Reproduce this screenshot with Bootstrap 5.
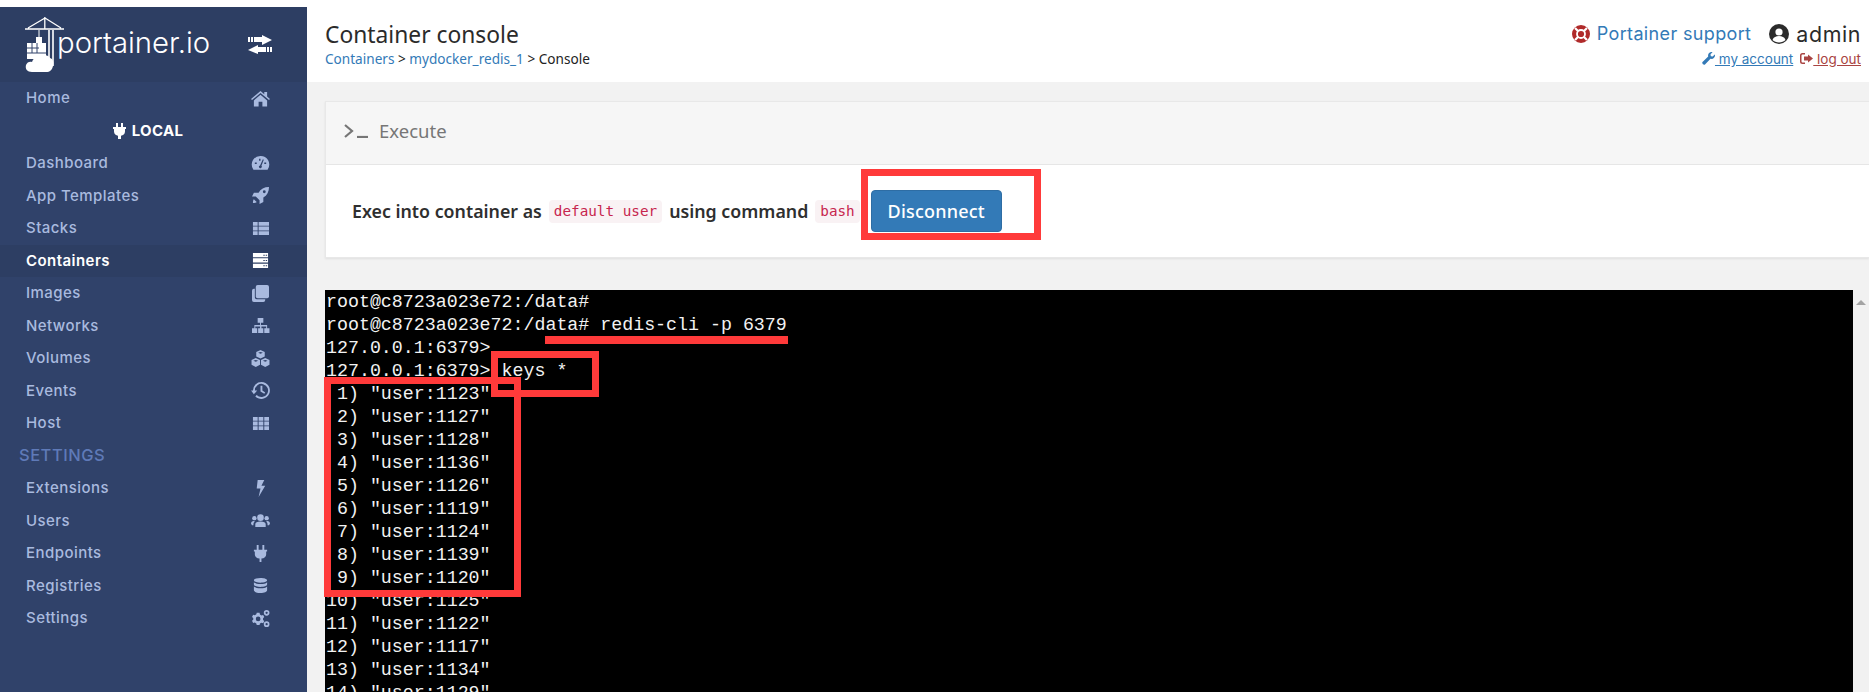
<!DOCTYPE html>
<html lang="en">
<head>
<meta charset="utf-8">
<title>Container console</title>
<link href="https://cdn.jsdelivr.net/npm/bootstrap@5.3.0/dist/css/bootstrap.min.css" rel="stylesheet">
<style>
html,body{height:692px;overflow:hidden;background:#fff;}
.shell{height:692px;}
.side{width:307px;margin-top:7px;background:#30426a;color:#a9badf;font-family:Inter,sans-serif;font-weight:500;font-size:15px;letter-spacing:.45px;flex:none;}
.brandbar{height:75px;background:#2d3e63;padding-left:25px;padding-right:35px;}
.brandname{font-family:Inter,sans-serif;font-weight:300;font-size:29.3px;letter-spacing:0;color:#fff;margin-left:-8px;margin-top:-4px;}
.navrow{height:32.5px;padding:0 37px 0 26px;color:#a9badf;text-decoration:none;}
.navrow svg{width:19px;height:17px;fill:currentColor;}
.navrow.on{background:#2d3e63;color:#fff;font-weight:600;}
.navzone{height:32.5px;color:#fff;font-weight:700;font-size:15px;letter-spacing:.3px;gap:6px;margin-left:-11px;}
.navzone svg{width:13px;height:16px;fill:#fff;}
.navhead{height:32.5px;padding-left:19px;color:#5f7ab8;font-size:16.5px;font-weight:500;letter-spacing:.5px;}
.mainpane{min-width:0;background:#f2f2f2;}
.topband{height:82px;background:#fff;padding:0 8px 0 18px;}
.pagetitle{font-family:"Noto Sans",sans-serif;font-size:22.8px;color:#2b2b2b;margin-top:21px;line-height:28px;}
.crumbs{font-family:"Noto Sans",sans-serif;font-size:13.6px;color:#222;line-height:18px;margin-top:1px;}
.crumbs a,.blue{color:#337ab7;text-decoration:none;}
.useraside{font-family:Inter,sans-serif;margin-top:22px;}
.supportline{font-size:18px;letter-spacing:.35px;line-height:24px;gap:7px;}
.adminline{font-size:21.4px;letter-spacing:.6px;line-height:24px;color:#2b2b2b;gap:7px;margin-left:18px;}
.linksline{font-size:13.5px;line-height:18px;margin-top:4px;gap:7px;}
.linksline a{color:#337ab7;text-decoration:underline;}
.linksline a.redlink{color:#a94442;}
.linksline svg{width:13px;height:13px;fill:currentColor;vertical-align:-1px;}
.panelwrap{padding:19px 0 0 18px;}
.execpanel{border-radius:0;border:1px solid #e8e8e8;border-right:0;box-shadow:0 1px 2px rgba(0,0,0,.08);height:157px;}
.execpanel .card-header{height:63px;background:#f6f6f6;border-bottom:1px solid #e6e6e6;border-radius:0!important;padding:0 0 5px 18px;font-family:"Noto Sans",sans-serif;font-size:18.5px;color:#767676;gap:10px;}
.execpanel .card-body{padding:25px 0 0 26px;font-family:"Noto Sans",sans-serif;font-weight:600;font-size:17.8px;color:#2f2f2f;align-items:flex-start;}
.execline{height:42px;gap:7px;}
.codechip{font-family:"DejaVu Sans Mono",monospace;font-size:14.3px;font-weight:500;background:#f9f2f4;color:#c7254e;border-radius:4px;padding:3px 5px;line-height:17px;}
.btn.discobtn{flex:none;background:#337ab7;border:1px solid #2e6da4;color:#fff;font-family:"Noto Sans",sans-serif;font-weight:500;font-size:18px;letter-spacing:.2px;width:131px;height:42px;padding:0;margin-left:11px;border-radius:4px;}
.termwrap{margin:32px 0 0 18px;height:402px;}
.termbox{background:#000;height:402px;overflow:hidden;}
.termtext{flex:1;margin:0;padding:1px 0 0 1px;color:#f2f2f2;font-family:"Liberation Mono",monospace;font-size:18.3px;line-height:23px;overflow:hidden;}
.termbar{width:16px;background:#f1f1f1;flex:none;}
.termarrow{width:0;height:0;border-left:5px solid transparent;border-right:5px solid transparent;border-bottom:5px solid #a3a3a3;margin:10px auto 0;}
.redmark{position:absolute;border:7px solid #ff3a3a;pointer-events:none;}
.redfill{position:absolute;background:#ff3a3a;}
</style>
</head>
<body>
<div class="shell d-flex">
  <aside class="side d-flex flex-column">
    <div class="brandbar d-flex align-items-center justify-content-between">
      <div class="d-flex align-items-center">
        <svg width="40" height="56" viewBox="0 0 40 56" fill="none" stroke="#fff" aria-hidden="true">
          <path d="M0 12H39M20 1 3 11M20 1l16 10M19.800 0v12" stroke-width="1.300"/>
          <path d="M24 13v36M28 13v36" stroke-width="1.600"/>
          <path d="M14 13v8" stroke-width="1"/>
          <rect x="11" y="20" width="6" height="6" fill="#fff" stroke="none"/>
          <g fill="#fff" stroke="none"><path d="M2 26h19v16H2z"/></g>
          <path d="M2 31h12M2 36h19M7 26v10M12 26v10" stroke="#30426a" stroke-width="1"/>
          <path d="M7 55c-5 0-7-3-6-7 1-3 4-4 6-3 1-4 5-6 9-5 2-3 8-2 9 1 3 1 4 4 3 8-1 4-3 6-7 6z" fill="#fff" stroke="none"/>
        </svg>
        <span class="brandname">portainer.io</span>
      </div>
      <svg width="24" height="20" viewBox="0 0 24 20" fill="#fff" aria-hidden="true"><path d="M14 2V0l10 5-10 5V7h-8V2zM0 2h2v5H0zM3 2h2v5H3zM10 10v2h8v5h-8v2L0 15z"/><path d="M19 12h2v5h-2zM22 12h2v5h-2z"/></svg>
    </div>
    <a class="navrow d-flex align-items-center justify-content-between" href="#">Home<svg viewBox="0 0 20 18"><path d="M10 1 0 9.500l1 1.200 9-7.600 9 7.600 1-1.200-3-2.500V2h-3v2.500zM3 11l7-6 7 6v6.500h-5v-5H8v5H3z"/></svg></a>
    <div class="navzone d-flex align-items-center justify-content-center"><svg viewBox="0 0 13 16"><path d="M3 0h2v4h3V0h2v4h3v2h-1v2.500c0 2.500-2 4-4 4.300V16H5v-3.200c-2-.3-4-1.800-4-4.300V6H0V4h3z"/></svg>LOCAL</div>
    <a class="navrow d-flex align-items-center justify-content-between" href="#">Dashboard<svg viewBox="0 0 20 18"><path fill-rule="evenodd" d="M10 1a9 9 0 0 0-8 13.500l.5 1h15l.5-1A9 9 0 0 0 10 1zM8.500 4h1.500v2H8.500zM4 8h2v1.500H4zM14 8h2v1.500h-2zM12.500 4.500l1 .5L11 11.500a1.500 1.500 0 1 1-1.500-.5z"/></svg></a>
    <a class="navrow d-flex align-items-center justify-content-between" href="#">App Templates<svg viewBox="0 0 20 18"><path fill-rule="evenodd" d="M19 0c-5 0-9 2-11 6H3L1 10h4l4 4v4l4-2v-5c4-2 6-6 6-11zM14 3.500a1.500 1.500 0 1 1 0 3 1.500 1.500 0 0 1 0-3zM3 13c-1 1-1 3-1 4 1 0 3 0 4-1z"/></svg></a>
    <a class="navrow d-flex align-items-center justify-content-between" href="#">Stacks<svg viewBox="0 0 20 18"><path d="M2 2h5v4H2zM8 2h11v4H8zM2 7h5v4H2zM8 7h11v4H8zM2 12h5v4H2zM8 12h11v4H8z"/></svg></a>
    <a class="navrow on d-flex align-items-center justify-content-between" href="#">Containers<svg viewBox="0 0 20 18"><path fill-rule="evenodd" d="M2 1h16v4.500H2zM2 6.700h16v4.500H2zM2 12.500h16V17H2zM13 3h1.500v1H13zM15.500 3H17v1h-1.500zM13 8.500h1.500v1H13zM15.500 8.500H17v1h-1.500zM13 14h1.500v1H13zM15.500 14H17v1h-1.500z"/></svg></a>
    <a class="navrow d-flex align-items-center justify-content-between" href="#">Images<svg viewBox="0 0 20 18"><path d="M7 0h10a2 2 0 0 1 2 2v10a2 2 0 0 1-2 2H7a2 2 0 0 1-2-2V2a2 2 0 0 1 2-2z"/><path d="M4 4v9a2 2 0 0 0 2 2h9v1a2 2 0 0 1-2 2H3a2 2 0 0 1-2-2V6a2 2 0 0 1 2-2z"/></svg></a>
    <a class="navrow d-flex align-items-center justify-content-between" href="#">Networks<svg viewBox="0 0 20 18"><path d="M7 1h6v5h-2.500v2.500H17V12h2.500v5h-5.500v-5h2v-2h-5v2h2v5H7.500v-5h2v-2h-5v2h2v5H1v-5h2.500V8.500h6V6H7z"/></svg></a>
    <a class="navrow d-flex align-items-center justify-content-between" href="#">Volumes<svg viewBox="0 0 20 18"><path fill-rule="evenodd" d="M10 0l4.500 2v5l-4.500 2-4.500-2V2zM10 2 7.500 3l2.500 1 2.500-1zM5 8.500l4.500 2v5L5 18l-4.500-2.500v-5zM5 10.500 2.500 11.500 5 12.500l2.500-1zM15 8.500l4.500 2v5L15 18l-4.500-2.500v-5zM15 10.500l-2.500 1 2.500 1 2.500-1z"/></svg></a>
    <a class="navrow d-flex align-items-center justify-content-between" href="#">Events<svg viewBox="0 0 20 18"><path d="M11 0a9 9 0 1 1-6.500 15.300l1.400-1.500A7 7 0 1 0 4 9h2.500L3 13 0 9h2a9 9 0 0 1 9-9zM10 4h2v5l3 2-1 1.500-4-2.500z"/></svg></a>
    <a class="navrow d-flex align-items-center justify-content-between" href="#">Host<svg viewBox="0 0 20 18"><path d="M2 2h5v4H2zM8 2h5v4H8zM14 2h5v4h-5zM2 7h5v4H2zM8 7h5v4H8zM14 7h5v4h-5zM2 12h5v4H2zM8 12h5v4H8zM14 12h5v4h-5z"/></svg></a>
    <div class="navhead d-flex align-items-center">SETTINGS</div>
    <a class="navrow d-flex align-items-center justify-content-between" href="#">Extensions<svg viewBox="0 0 20 18"><path d="M7 0h7l-3 6h4L8 18l2-9H6z"/></svg></a>
    <a class="navrow d-flex align-items-center justify-content-between" href="#">Users<svg viewBox="0 0 20 18"><circle cx="10" cy="6" r="3.500"/><circle cx="3.500" cy="6.500" r="2.300"/><circle cx="16.500" cy="6.500" r="2.300"/><path d="M4.500 16v-3c0-2 2-3 5.500-3s5.500 1 5.500 3v3zM0 12.500c0-2 1-3 3-3l1 .5c-1 1-1.500 1.500-1.500 4H1zM20 12.500c0-2-1-3-3-3l-1 .5c1 1 1.500 1.500 1.500 4H19z"/></svg></a>
    <a class="navrow d-flex align-items-center justify-content-between" href="#">Endpoints<svg viewBox="0 0 20 18"><path d="M6 0h2v5h4V0h2v5h3v2h-1v3c0 2.500-2 4-5 4.300V18H9v-3.700C6 14 4 12.500 4 10V7H3V5h3z"/></svg></a>
    <a class="navrow d-flex align-items-center justify-content-between" href="#">Registries<svg viewBox="0 0 20 18"><path d="M10 1c4 0 7 1 7 2.500S14 6 10 6 3 5 3 3.500 6 1 10 1zM3 5.500C4.500 7 7 7.500 10 7.500s5.500-.5 7-2V8c0 1.500-3 2.500-7 2.500S3 9.500 3 8zM3 10c1.500 1.500 4 2 7 2s5.500-.5 7-2v4c0 1.500-3 3-7 3s-7-1.500-7-3z"/></svg></a>
    <a class="navrow d-flex align-items-center justify-content-between" href="#">Settings<svg viewBox="0 0 20 18"><path fill-rule="evenodd" d="M6 3h3l.4 1.800 1.600.9 1.800-.5 1.200 2.300-1.300 1.200v1.800l1.300 1.200-1.200 2.300-1.800-.5-1.600.9L9 16H6l-.4-1.800-1.600-.9-1.800.5L1 11.500l1.300-1.200V8.500L1 7.300l1.200-2.300 1.800.5 1.600-.9zM7.500 7a2.500 2.500 0 1 0 0 5 2.500 2.500 0 0 0 0-5z"/><path fill-rule="evenodd" d="M16.500 0a3 3 0 1 1 0 6 3 3 0 0 1 0-6zm0 1.800a1.200 1.200 0 1 0 0 2.400 1.200 1.200 0 0 0 0-2.400zM16.500 12a3 3 0 1 1 0 6 3 3 0 0 1 0-6zm0 1.800a1.200 1.200 0 1 0 0 2.400 1.200 1.200 0 0 0 0-2.400z"/></svg></a>
  </aside>

  <main class="mainpane flex-grow-1 d-flex flex-column">
    <header class="topband d-flex justify-content-between">
      <div>
        <div class="pagetitle">Container console</div>
        <div class="crumbs"><a href="#">Containers</a> &gt; <a href="#">mydocker_redis_1</a> &gt; Console</div>
      </div>
      <div class="useraside d-flex flex-column align-items-end">
        <div class="d-flex align-items-center">
          <a class="supportline blue d-flex align-items-center" href="#"><svg width="18" height="18" viewBox="0 0 18 18" aria-hidden="true"><circle cx="9" cy="9" r="9" fill="#b02a2a"/><circle cx="9" cy="9" r="4" fill="none" stroke="#fff" stroke-width="1.800"/><path d="M3 3l3 3M15 3l-3 3M3 15l3-3M15 15l-3-3" stroke="#fff" stroke-width="2.200"/></svg>Portainer support</a>
          <div class="adminline d-flex align-items-center"><svg width="20" height="20" viewBox="0 0 20 20" aria-hidden="true"><circle cx="10" cy="10" r="10" fill="#2b2b2b"/><circle cx="10" cy="8" r="3.600" fill="#fff"/><path d="M3.500 16c1-3 3.500-4 6.500-4s5.500 1 6.500 4c-1.500 1.500-4 2.500-6.500 2.500S5 17.500 3.500 16z" fill="#fff"/></svg>admin</div>
        </div>
        <div class="linksline d-flex">
          <a href="#"><svg viewBox="0 0 13 13" aria-hidden="true"><path d="M13 3.500c0 2-2 4-4.500 3.300L3 12.500c-1 1-3.500-1-2.500-2.500l5.700-5.500C5.500 2 7.500 0 9.500 0c.5 0 1 0 1 .3L8.500 2.300l.3 1.900 1.900.3 2-2c.2 0 .3.500.3 1z"/></svg> my account </a>
          <a class="redlink" href="#"><svg viewBox="0 0 13 13" aria-hidden="true"><path d="M5 1v1.500H2.500C2 2.500 1.500 3 1.500 3.500v6c0 .5.500 1 1 1H5V12H2.500A2.500 2.500 0 0 1 0 9.500v-6A2.500 2.500 0 0 1 2.500 1zM8 2.500l5 4-5 4V8.500H4v-4h4z"/></svg> log out</a>
        </div>
      </div>
    </header>

    <div class="panelwrap">
      <div class="position-relative">
        <section class="execpanel card">
          <div class="card-header d-flex align-items-center">
            <svg width="25" height="14" viewBox="0 0 25 14" fill="none" stroke="#767676" aria-hidden="true"><path d="M1 1l7 6-7 6" stroke-width="2.200"/><path d="M13 13h11" stroke-width="2.200"/></svg>
            <span>Execute</span>
          </div>
          <div class="card-body d-flex">
            <div class="execline d-flex align-items-center">
              <span>Exec into container as</span>
              <code class="codechip">default user</code>
              <span>using command</span>
              <code class="codechip">bash</code>
            </div>
            <button type="button" class="btn discobtn">Disconnect</button>
          </div>
        </section>
        <div class="redmark" style="left:536px;top:68px;width:180px;height:71px"></div>
      </div>
    </div>

    <div class="termwrap position-relative">
      <div class="termbox d-flex">
<pre class="termtext">root@c8723a023e72:/data#
root@c8723a023e72:/data# redis-cli -p 6379
127.0.0.1:6379&gt;
127.0.0.1:6379&gt; keys *
 1) "user:1123"
 2) "user:1127"
 3) "user:1128"
 4) "user:1136"
 5) "user:1126"
 6) "user:1119"
 7) "user:1124"
 8) "user:1139"
 9) "user:1120"
10) "user:1125"
11) "user:1122"
12) "user:1117"
13) "user:1134"
14) "user:1129"</pre>
        <div class="termbar"><div class="termarrow"></div></div>
      </div>
      <div class="redfill" style="left:220px;top:46px;width:243px;height:8px"></div>
      <div class="redmark" style="left:166px;top:61px;width:108px;height:46px"></div>
      <div class="redmark" style="left:-1px;top:87px;width:197px;height:220px"></div>
    </div>
  </main>
</div>
<script src="https://cdn.jsdelivr.net/npm/bootstrap@5.3.0/dist/js/bootstrap.bundle.min.js"></script>
</body>
</html>
